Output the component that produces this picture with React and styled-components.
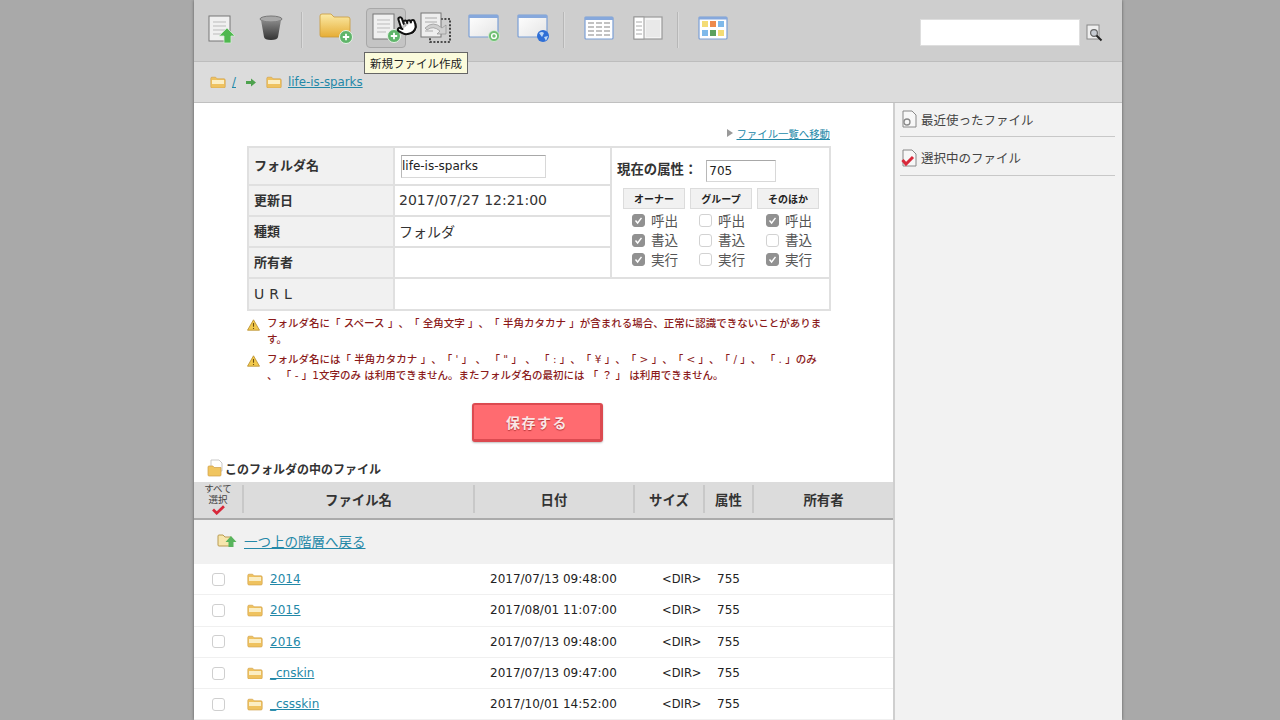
import React from 'react'
import styled, { createGlobalStyle } from 'styled-components'
import { Pointer } from 'lucide-react'

const GlobalStyle = createGlobalStyle`
  html, body { margin:0; padding:0; height:100%; overflow:hidden; background:#a9a9a9; }
  body { font-family:"DejaVu Sans","Noto Sans CJK JP",sans-serif; color:#333; text-spacing-trim:space-all; }
  * { box-sizing:border-box; }
`

const Page = styled.div`
  position:relative;
  width:928px;
  height:720px;
  margin-left:194px;
  background:#fff;
  box-shadow:0 0 3px rgba(0,0,0,.45);
  overflow:hidden;
`
const Toolbar = styled.div`
  display:flex;
  align-items:flex-start;
  height:62px;
  padding:8px 0 0 8px;
  background:#cecece;
  border-bottom:1px solid #bdbdbd;
`
const ToolGroup = styled.div`
  display:flex;
  gap:9.2px;
`
const Tool = styled.div`
  width:40px;
  height:40px;
  display:flex;
  align-items:center;
  justify-content:center;
  border-radius:4px;
  border:${({$active})=>$active ? '1px solid #a8a8a8' : '1px solid transparent'};
  background:${({$active})=>$active ? '#c4c4c4' : 'transparent'};
`
const Separator = styled.div`
  width:2px;
  height:36px;
  margin:4px 14px 0 ${({$left})=>$left || 9}px;
  background:#b7b7b7;
  border-right:1px solid #dadada;
`
const SearchArea = styled.div`
  display:flex;
  align-items:center;
  gap:6px;
  margin-left:auto;
  margin-right:18px;
  margin-top:11px;
`
const SearchInput = styled.div`
  width:160px;
  height:27px;
  background:#fff;
  border:1px solid #dedede;
`
const Breadcrumb = styled.div`
  display:flex;
  align-items:center;
  height:41px;
  padding-left:16px;
  background:#dcdcdc;
  border-bottom:1px solid #c0c0c0;
  font-size:11.8px;
`
const CrumbLink = styled.a`
  display:flex;
  align-items:center;
  color:#2388a8;
  text-decoration:underline;
  margin-left:${({$left})=>$left}px;
`
const Columns = styled.div`
  display:flex;
  height:617px;
`
const Main = styled.div`
  width:699px;
  background:#fff;
`
const Sidebar = styled.div`
  flex:1;
  background:#f2f2f2;
  border-left:2px solid #cfcfcf;
  padding:0 7px 0 5px;
`
const SideItem = styled.div`
  display:flex;
  align-items:center;
  gap:3px;
  height:${({$first})=>$first ? 34 : 39}px;
  padding:${({$first})=>$first ? '0 0 1px' : '3px 0 0'};
  padding-left:1px;
  border-bottom:1px solid #c8c8c8;
  font-size:12.5px;
  color:#444;
`
const FormArea = styled.div`
  padding:22px 62px 0 53px;
`
const MoveLine = styled.div`
  display:flex;
  justify-content:flex-end;
  align-items:center;
  gap:3px;
  height:16px;
  margin-bottom:5px;
  margin-right:1px;
  font-size:10.4px;
`
const Link = styled.a`
  color:#2388a8;
  text-decoration:underline;
`
const GrayArrow = styled.span`
  width:0;
  height:0;
  border-left:6px solid #999;
  border-top:4px solid transparent;
  border-bottom:4px solid transparent;
`
const InfoTable = styled.table`
  width:584px;
  table-layout:fixed;
  border-collapse:collapse;
  border:2px solid #e0e0e0;
`
const Label = styled.th`
  width:146px;
  height:${({$h})=>$h}px;
  padding:0 0 ${({$h})=>$h > 35 ? 4 : 2}px 5px;
  background:#f1f1f1;
  border:2px solid #e0e0e0;
  text-align:left;
  font-size:13px;
  font-weight:700;
  color:#333;
`
const UrlLabel = styled(Label)`
  padding-bottom:1px;
  font-size:14px;
  font-weight:400;
  letter-spacing:5px;
`
const Value = styled.td`
  height:${({$h})=>$h}px;
  padding:0 0 2px 4px;
  border:2px solid #e0e0e0;
  font-size:14px;
  color:#333;
`
const PermCell = styled.td`
  width:219px;
  padding:0 0 0 5px;
  border:2px solid #e0e0e0;
  vertical-align:top;
`
const TextBox = styled.div`
  width:${({$w})=>$w}px;
  height:${({$h})=>$h}px;
  display:flex;
  align-items:center;
  padding-left:${({$pad})=>$pad}px;
  border:1px solid #d8d8d8;
  border-top-color:#a8a8a8;
  border-left-color:#b8b8b8;
  font-size:12px;
  font-weight:400;
  color:#222;
`
const NameBox = styled(TextBox)`
  margin:2px 0 0 2px;
`
const AttrLine = styled.div`
  display:flex;
  align-items:center;
  gap:9px;
  margin-top:12px;
  font-size:13.4px;
  font-weight:700;
`
const AttrLabel = styled.span`
  line-height:1;
  margin-bottom:3px;
`
const PermGrid = styled.div`
  display:grid;
  grid-template-columns:repeat(3,62px);
  gap:5px;
  margin:6px 0 0 6px;
`
const PermColumn = styled.div`
  display:flex;
  flex-direction:column;
`
const PermHead = styled.div`
  height:21px;
  display:flex;
  align-items:center;
  justify-content:center;
  margin-bottom:1px;
  background:#f1f1f1;
  border:1px solid #dcdcdc;
  font-size:10px;
  font-weight:700;
  color:#222;
`
const PermRow = styled.div`
  display:flex;
  align-items:center;
  gap:6px;
  height:19.6px;
  padding-left:9px;
  font-size:13.6px;
  color:#555;
`
const CheckBox = styled.span`
  width:13px;
  height:13px;
  flex:none;
  display:flex;
  align-items:center;
  justify-content:center;
  margin-top:2px;
  border-radius:3px;
  background:${({$on})=>$on ? '#919191' : '#fff'};
  border:1px solid ${({$on})=>$on ? '#919191' : '#d2d2d2'};
`
const Warning = styled.div`
  display:flex;
  gap:7px;
  margin-top:${({$top})=>$top}px;
  font-size:10.5px;
  line-height:15.5px;
  color:#8b1a1a;
  white-space:nowrap;
`
const WarnText = styled.div`
  font-weight:500;
`
const SaveWrap = styled.div`
  display:flex;
  justify-content:center;
  margin:20px 0 0 -3px;
`
const SaveButton = styled.div`
  width:131px;
  height:39px;
  display:flex;
  align-items:center;
  justify-content:center;
  border-radius:3px;
  background:#ff6b70;
  border:2px solid #dc4a50;
  border-bottom-width:3px;
  border-right-width:3px;
  box-shadow:0 1px 2px rgba(0,0,0,.25);
  color:#fbe6e6;
  font-size:14px;
  font-weight:700;
  letter-spacing:1.5px;
  text-shadow:0 1px 1px rgba(150,30,30,.7);
`
const SectionTitle = styled.div`
  display:flex;
  align-items:center;
  gap:2px;
  height:18px;
  margin:17px 0 5px 13px;
  font-size:12px;
  font-weight:700;
  color:#333;
`
const FileGrid = styled.div`
  display:grid;
  grid-template-columns:48px 231px 160px 70px 49px 1fr;
  align-items:center;
`
const HeadRow = styled(FileGrid)`
  height:38px;
  padding-bottom:2px;
  background:#dcdcdc;
  border-bottom:2px solid #ababab;
`
const HeadCell = styled.div`
  height:28px;
  display:flex;
  align-items:center;
  justify-content:center;
  border-left:${({$first})=>$first ? 'none' : '2px solid #c8c8c8'};
  font-size:13.4px;
  font-weight:700;
  color:#333;
`
const SelectAll = styled.div`
  display:flex;
  flex-direction:column;
  align-items:center;
  font-size:9.5px;
  font-weight:400;
  line-height:11px;
  color:#444;
  text-align:center;
`
const BackRow = styled.div`
  display:flex;
  align-items:center;
  gap:7px;
  height:44px;
  padding-left:23px;
  padding-bottom:3px;
  background:#f1f1f1;
  font-size:13.5px;
`
const FileRow = styled(FileGrid)`
  height:31.3px;
  border-bottom:1px solid #f0f0f0;
  font-size:12px;
  color:#222;
`
const RowCheck = styled.span`
  width:13px;
  height:13px;
  margin-left:18px;
  border-radius:3px;
  background:#fff;
  border:1px solid #cfcfcf;
`
const NameCell = styled.div`
  display:flex;
  align-items:center;
  gap:7px;
  margin-left:5px;
`
const DateCell = styled.div`
  padding-left:17px;
`
const SizeCell = styled.div`
  padding-left:29px;
  font-size:11.5px;
`
const AttrCell = styled.div`
  padding-left:14px;
`
const Tooltip = styled.div`
  position:absolute;
  left:170px;
  top:52px;
  width:104px;
  height:22px;
  display:flex;
  align-items:center;
  justify-content:center;
  padding-bottom:1px;
  background:#fbfbdc;
  border:1px solid #666;
  font-size:11.5px;
  color:#222;
`
const HandCursor = styled.div`
  position:absolute;
  left:201px;
  top:14px;
  transform:rotate(-18deg);
  line-height:0;
`

const FolderIcon = ({w=16})=>(
  <svg width={w} height={w*0.8} viewBox="0 0 20 16">
    <path d="M1 3 Q1 1.500 2.500 1.500 H7 L9 3.500 H17.500 Q19 3.500 19 5 V13.500 Q19 15 17.500 15 H2.500 Q1 15 1 13.500Z" fill="#efc25f" stroke="#cf9f48" strokeWidth=".8"/>
    <path d="M2.500 5 H17.500 V10 H2.500Z" fill="#fbeec4"/>
  </svg>
)
const Badge = ({x,y,r=6,fill='#5fb56a'})=>(
  <g>
    <circle cx={x} cy={y} r={r} fill={fill} stroke="#e8f3e8" strokeWidth="1"/>
    <path d={`M${x-3.2} ${y}H${x+3.2}M${x} ${y-3.2}V${y+3.2}`} stroke="#fff" strokeWidth="1.8"/>
  </g>
)
const PageShape = ({x=3,y=4})=>(
  <g>
    <rect x={x} y={y} width="21" height="25" fill="#f0f0f0" stroke="#777" strokeWidth="1"/>
    <path d={`M${x+4} ${y+6}h13M${x+4} ${y+10}h13M${x+4} ${y+14}h13M${x+4} ${y+18}h9`} stroke="#bbb" strokeWidth="1"/>
  </g>
)
const UploadDocIcon = ()=>(
  <svg width="32" height="32" viewBox="0 0 32 32">
    <PageShape/>
    <path d="M21 16 L29 24 H25 V31 H18 V24 H13Z" fill="#4fb84f" stroke="#d5ecd5" strokeWidth=".8"/>
  </svg>
)
const TrashIcon = ()=>(
  <svg width="26" height="28" viewBox="0 0 26 28">
    <defs>
      <linearGradient id="bin" x1="0" x2="0" y1="0" y2="1">
        <stop offset="0" stopColor="#8a8a8a"/><stop offset="1" stopColor="#333"/>
      </linearGradient>
    </defs>
    <ellipse cx="13" cy="5" rx="11" ry="3" fill="#a8a8a8" stroke="#777"/>
    <path d="M3 6 L6 23 Q6.500 26 13 26 Q19.500 26 20 23 L23 6 Q13 10 3 6Z" fill="url(#bin)"/>
  </svg>
)
const NewFolderIcon = ()=>(
  <svg width="36" height="32" viewBox="0 0 36 32">
    <defs>
      <linearGradient id="fold" x1="0" x2="0" y1="0" y2="1">
        <stop offset="0" stopColor="#fbeaa6"/><stop offset="1" stopColor="#e6ad35"/>
      </linearGradient>
    </defs>
    <path d="M1 4 Q1 2 3 2 H12 L15 5 H29 Q31 5 31 7 V23 Q31 25 29 25 H3 Q1 25 1 23Z" fill="url(#fold)" stroke="#c99a3a" strokeWidth=".8"/>
    <Badge x={27} y={25} r={6.5}/>
  </svg>
)
const NewDocIcon = ()=>(
  <svg width="32" height="32" viewBox="0 0 32 32">
    <PageShape y={2}/>
    <Badge x={24} y={24} r={6.5}/>
  </svg>
)
const CopyDocIcon = ()=>(
  <svg width="34" height="34" viewBox="0 0 34 34">
    <rect x="11" y="8" width="20" height="23" fill="none" stroke="#222" strokeWidth="1.6" strokeDasharray="2 1.6"/>
    <rect x="2" y="2" width="20" height="24" fill="#eee" stroke="#777"/>
    <path d="M6 7h12M6 11h12M6 20h8" stroke="#aaa"/>
    <path d="M6 17 Q14 9 23 17 L27 14 V23 H18 L21 20 Q14 14 8 19Z" fill="#cfcfcf" stroke="#888" strokeWidth=".6"/>
  </svg>
)
const WindowIcon = ({children})=>(
  <svg width="34" height="30" viewBox="0 0 34 30">
    <defs>
      <linearGradient id="win" x1="0" x2="1" y1="0" y2="1">
        <stop offset="0" stopColor="#fff"/><stop offset="1" stopColor="#e4e4e4"/>
      </linearGradient>
    </defs>
    <rect x="1" y="2" width="29" height="22" rx="1" fill="url(#win)" stroke="#7b9fd6" strokeWidth="1.2"/>
    <rect x="1" y="2" width="29" height="3" fill="#86a8dc"/>
    {children}
  </svg>
)
const RefreshWindowIcon = ()=>(
  <WindowIcon>
    <circle cx="26" cy="23" r="5.500" fill="#6fbf73" stroke="#dcefdc" strokeWidth=".8"/>
    <circle cx="26" cy="23" r="2.400" fill="none" stroke="#fff" strokeWidth="1.400"/>
  </WindowIcon>
)
const GlobeWindowIcon = ()=>(
  <WindowIcon>
    <circle cx="26" cy="23" r="6" fill="#2f6fd6"/>
    <path d="M22 20 Q25 18 27 20 L25 24Z M27 24 L31 23 L29 28Z" fill="#bcd8f7"/>
  </WindowIcon>
)
const TableIcon = ()=>(
  <svg width="30" height="26" viewBox="0 0 30 26">
    <rect x="1" y="2" width="28" height="22" rx="1" fill="#fff" stroke="#7b9fd6" strokeWidth="1.2"/>
    <rect x="1" y="2" width="28" height="3" fill="#86a8dc"/>
    <path d="M4 8h6M12 8h6M20 8h6M4 12h6M12 12h6M20 12h6M4 16h6M12 16h6M20 16h6M4 20h6M12 20h6M20 20h6" stroke="#aeaeae" strokeWidth="1.400"/>
  </svg>
)
const SplitIcon = ()=>(
  <svg width="30" height="26" viewBox="0 0 30 26">
    <rect x="1" y="2" width="28" height="22" fill="#f4f4f4" stroke="#9a9a9a" strokeWidth="1.2"/>
    <rect x="1" y="2" width="10" height="22" fill="#fff" stroke="#9a9a9a" strokeWidth="1"/>
    <path d="M3 7h6M3 11h6M3 15h6M3 19h6" stroke="#aaa"/>
    <rect x="13" y="5" width="14" height="17" fill="#e9e9e9"/>
  </svg>
)
const ColorGridIcon = ()=>(
  <svg width="30" height="26" viewBox="0 0 30 26">
    <rect x="1" y="2" width="28" height="22" rx="1" fill="#fff" stroke="#7b9fd6" strokeWidth="1.2"/>
    <rect x="1" y="2" width="28" height="2.500" fill="#86a8dc"/>
    <rect x="4" y="6" width="6" height="6" fill="#f4dc75"/>
    <rect x="12" y="6" width="6" height="6" fill="#ee8a4c"/>
    <rect x="20" y="6" width="6" height="6" fill="#7fb9ea"/>
    <rect x="4" y="15" width="6" height="6" fill="#7fb9ea"/>
    <rect x="12" y="15" width="6" height="6" fill="#5aa05e"/>
    <rect x="20" y="15" width="6" height="6" fill="#f4dc75"/>
  </svg>
)
const SearchDocIcon = ()=>(
  <svg width="18" height="20" viewBox="0 0 18 20">
    <rect x="1" y="2" width="12" height="14" fill="#efefef" stroke="#888"/>
    <circle cx="8" cy="10" r="3.400" fill="#c7ccd3" stroke="#666" strokeWidth="1.2"/>
    <path d="M10.500 12.500 L15.500 17.500" stroke="#222" strokeWidth="2"/>
  </svg>
)
const ArrowIcon = ()=>(
  <svg width="10" height="9" viewBox="0 0 10 9">
    <path d="M0 3H5V0.500L10 4.500L5 8.500V6H0Z" fill="#4ea24e"/>
  </svg>
)
const WarnIcon = ()=>(
  <svg width="13" height="12" viewBox="0 0 13 12" style={{flex:'none',marginTop:'3px'}}>
    <path d="M6.500 .8 L12.500 11.200 H.5Z" fill="#f2c94c" stroke="#b58a2a" strokeWidth=".8"/>
    <path d="M6.500 4V7.800M6.500 9V10" stroke="#6b4d10" strokeWidth="1.100"/>
  </svg>
)
const SmallCheck = ()=>(
  <svg width="9" height="9" viewBox="0 0 9 9">
    <path d="M1.500 4.500L3.600 7L7.500 1.800" fill="none" stroke="#fff" strokeWidth="1.400"/>
  </svg>
)
const RedCheck = ({w=14})=>(
  <svg width={w} height={w*0.7} viewBox="0 0 14 10">
    <path d="M1 5L5 9L13 1.500" fill="none" stroke="#d8283a" strokeWidth="3"/>
  </svg>
)
const FolderDocIcon = ()=>(
  <svg width="16" height="18" viewBox="0 0 16 18">
    <path d="M4 1H12L15 4V12H4Z" fill="#fff" stroke="#bbb" strokeWidth=".8"/>
    <path d="M1 8 Q1 7 2 7 H6 L7 8.500 H14 V16 Q14 17 13 17 H2 Q1 17 1 16Z" fill="#f0c560" stroke="#cf9f48" strokeWidth=".7"/>
  </svg>
)
const UpFolderIcon = ()=>(
  <svg width="20" height="16" viewBox="0 0 20 16">
    <path d="M1 3 Q1 2 2 2 H6 L8 4 H14 V13 H2 Q1 13 1 12Z" fill="#f7e6ad" stroke="#b99a50"/>
    <path d="M14 3 L19.500 9 H16.500 V14 H11.500 V9 H8.500Z" fill="#58b45c"/>
  </svg>
)
const RecentIcon = ()=>(
  <svg width="17" height="18" viewBox="0 0 17 18">
    <path d="M2 1H11L15 5V17H2Z" fill="#f7f7f7" stroke="#888"/>
    <circle cx="6" cy="12" r="3" fill="none" stroke="#888" strokeWidth="1.300"/>
  </svg>
)
const SelectedIcon = ()=>(
  <svg width="17" height="18" viewBox="0 0 17 18">
    <path d="M2 1H11L15 5V17H2Z" fill="#f7f7f7" stroke="#888"/>
    <path d="M1.500 11L5 15L12 8" fill="none" stroke="#d8283a" strokeWidth="3"/>
  </svg>
)

const perms = [
  {head:'オーナー', on:[true,true,true]},
  {head:'グループ', on:[false,false,false]},
  {head:'そのほか', on:[true,false,true]},
]
const permNames = ['呼出','書込','実行']

const files = [
  {name:'2014', date:'2017/07/13 09:48:00'},
  {name:'2015', date:'2017/08/01 11:07:00'},
  {name:'2016', date:'2017/07/13 09:48:00'},
  {name:'_cnskin', date:'2017/07/13 09:47:00'},
  {name:'_cssskin', date:'2017/10/01 14:52:00'},
]

const App = ()=>{
  return (
    <>
      <GlobalStyle/>
      <Page>
        <Toolbar>
          <ToolGroup>
            <Tool><UploadDocIcon/></Tool>
            <Tool><TrashIcon/></Tool>
          </ToolGroup>
          <Separator $left={10}/>
          <ToolGroup>
            <Tool><NewFolderIcon/></Tool>
            <Tool $active><NewDocIcon/></Tool>
            <Tool><CopyDocIcon/></Tool>
            <Tool><RefreshWindowIcon/></Tool>
            <Tool><GlobeWindowIcon/></Tool>
          </ToolGroup>
          <Separator/>
          <ToolGroup>
            <Tool><TableIcon/></Tool>
            <Tool><SplitIcon/></Tool>
          </ToolGroup>
          <Separator/>
          <ToolGroup>
            <Tool><ColorGridIcon/></Tool>
          </ToolGroup>
          <SearchArea>
            <SearchInput/>
            <SearchDocIcon/>
          </SearchArea>
        </Toolbar>
        <Breadcrumb>
          <FolderIcon/>
          <CrumbLink $left={6}>/</CrumbLink>
          <CrumbLink as="span" $left={10}><ArrowIcon/></CrumbLink>
          <CrumbLink as="span" $left={10}><FolderIcon/></CrumbLink>
          <CrumbLink $left={6}>life-is-sparks</CrumbLink>
        </Breadcrumb>
        <Columns>
          <Main>
            <FormArea>
              <MoveLine>
                <GrayArrow/>
                <Link>ファイル一覧へ移動</Link>
              </MoveLine>
              <InfoTable>
                <tbody>
                  <tr>
                    <Label $h={38}>フォルダ名</Label>
                    <Value><NameBox $w={145} $h={23} $pad={0}>life-is-sparks</NameBox></Value>
                    <PermCell rowSpan={4}>
                      <AttrLine>
                        <AttrLabel>現在の属性：</AttrLabel>
                        <TextBox $w={70} $h={22} $pad={2}>705</TextBox>
                      </AttrLine>
                      <PermGrid>
                        {perms.map(p=>(
                          <PermColumn key={p.head}>
                            <PermHead>{p.head}</PermHead>
                            {permNames.map((n,i)=>(
                              <PermRow key={n}>
                                <CheckBox $on={p.on[i]}>{p.on[i] && <SmallCheck/>}</CheckBox>
                                {n}
                              </PermRow>
                            ))}
                          </PermColumn>
                        ))}
                      </PermGrid>
                    </PermCell>
                  </tr>
                  <tr>
                    <Label $h={31}>更新日</Label>
                    <Value>2017/07/27 12:21:00</Value>
                  </tr>
                  <tr>
                    <Label $h={31}>種類</Label>
                    <Value>フォルダ</Value>
                  </tr>
                  <tr>
                    <Label $h={31}>所有者</Label>
                    <Value/>
                  </tr>
                  <tr>
                    <UrlLabel $h={32}>URL</UrlLabel>
                    <Value colSpan={2}/>
                  </tr>
                </tbody>
              </InfoTable>
              <Warning $top={5}>
                <WarnIcon/>
                <WarnText>
                  フォルダ名に「 スペース 」、「 全角文字 」、「 半角カタカナ 」が含まれる場合、正常に認識できないことがありま<br/>す。
                </WarnText>
              </Warning>
              <Warning $top={5}>
                <WarnIcon/>
                <WarnText>
                  フォルダ名には「 半角カタカナ 」、「 ' 」 、 「 " 」 、 「 : 」、「 ¥ 」、「 &gt; 」、「 &lt; 」、「 / 」、 「 . 」のみ<br/>
                  、 「 - 」1文字のみ は利用できません。またフォルダ名の最初には 「 ？ 」 は利用できません。
                </WarnText>
              </Warning>
              <SaveWrap>
                <SaveButton>保存する</SaveButton>
              </SaveWrap>
            </FormArea>
            <SectionTitle>
              <FolderDocIcon/>
              このフォルダの中のファイル
            </SectionTitle>
            <HeadRow>
              <HeadCell $first>
                <SelectAll>
                  すべて<br/>選択
                  <RedCheck w={13}/>
                </SelectAll>
              </HeadCell>
              <HeadCell>ファイル名</HeadCell>
              <HeadCell>日付</HeadCell>
              <HeadCell>サイズ</HeadCell>
              <HeadCell>属性</HeadCell>
              <HeadCell>所有者</HeadCell>
            </HeadRow>
            <BackRow>
              <UpFolderIcon/>
              <Link>一つ上の階層へ戻る</Link>
            </BackRow>
            {files.map(f=>(
              <FileRow key={f.name}>
                <RowCheck/>
                <NameCell>
                  <FolderIcon/>
                  <Link>{f.name}</Link>
                </NameCell>
                <DateCell>{f.date}</DateCell>
                <SizeCell>&lt;DIR&gt;</SizeCell>
                <AttrCell>755</AttrCell>
                <div/>
              </FileRow>
            ))}
          </Main>
          <Sidebar>
            <SideItem $first><RecentIcon/>最近使ったファイル</SideItem>
            <SideItem><SelectedIcon/>選択中のファイル</SideItem>
          </Sidebar>
        </Columns>
        <Tooltip>新規ファイル作成</Tooltip>
        <HandCursor>
          <Pointer size={22} fill="#fff" stroke="#111" strokeWidth={2.2}/>
        </HandCursor>
      </Page>
    </>
  )
}

export default App
